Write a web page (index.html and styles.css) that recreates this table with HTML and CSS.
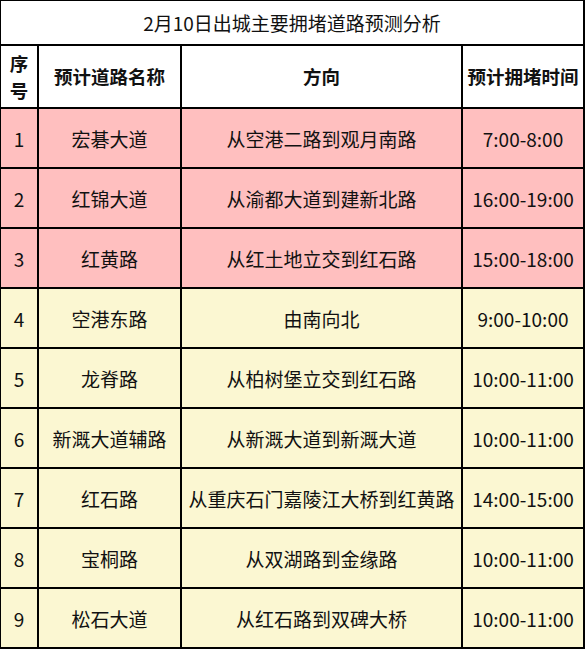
FILE: index.html
```html
<!DOCTYPE html>
<html lang="zh">
<head>
<meta charset="utf-8">
<link rel="stylesheet" href="styles.css">
</head>
<body>
<div class="table">
  <div class="cell title">2月10日出城主要拥堵道路预测分析</div>
  <div class="cell head narrow">序<br>号</div>
  <div class="cell head">预计道路名称</div>
  <div class="cell head">方向</div>
  <div class="cell head">预计拥堵时间</div>

  <div class="cell pink">1</div><div class="cell pink">宏碁大道</div><div class="cell pink">从空港二路到观月南路</div><div class="cell pink">7:00-8:00</div>
  <div class="cell pink">2</div><div class="cell pink">红锦大道</div><div class="cell pink">从渝都大道到建新北路</div><div class="cell pink">16:00-19:00</div>
  <div class="cell pink">3</div><div class="cell pink">红黄路</div><div class="cell pink">从红土地立交到红石路</div><div class="cell pink">15:00-18:00</div>
  <div class="cell yellow">4</div><div class="cell yellow">空港东路</div><div class="cell yellow">由南向北</div><div class="cell yellow">9:00-10:00</div>
  <div class="cell yellow">5</div><div class="cell yellow">龙脊路</div><div class="cell yellow">从柏树堡立交到红石路</div><div class="cell yellow">10:00-11:00</div>
  <div class="cell yellow">6</div><div class="cell yellow">新溉大道辅路</div><div class="cell yellow">从新溉大道到新溉大道</div><div class="cell yellow">10:00-11:00</div>
  <div class="cell yellow">7</div><div class="cell yellow">红石路</div><div class="cell yellow">从重庆石门嘉陵江大桥到红黄路</div><div class="cell yellow">14:00-15:00</div>
  <div class="cell yellow">8</div><div class="cell yellow">宝桐路</div><div class="cell yellow">从双湖路到金缘路</div><div class="cell yellow">10:00-11:00</div>
  <div class="cell yellow">9</div><div class="cell yellow">松石大道</div><div class="cell yellow">从红石路到双碑大桥</div><div class="cell yellow">10:00-11:00</div>
</div>
</body>
</html>
```
FILE: styles.css
```css
html, body {
  margin: 0;
  padding: 0;
  background: #ffffff;
}
body {
  font-family: "Noto Sans CJK SC", "Noto Sans", sans-serif;
  color: #111111;
}
.table {
  width: 582px;
  padding: 1px 2px 2px 1px;
  background: #000000;
  display: grid;
  grid-template-columns: 36px 141px 279px 120px;
  grid-template-rows: 43px 61px repeat(9, 58px);
  gap: 2px;
}
.cell {
  display: flex;
  align-items: center;
  justify-content: center;
  text-align: center;
  font-size: 19px;
  line-height: 27px;
  white-space: nowrap;
  overflow: hidden;
}
.title {
  grid-column: 1 / 5;
  background: #ffffff;
  font-weight: 400;
}
.head {
  background: #ffffff;
  font-weight: 700;
  font-size: 18.5px;
}
.narrow {
  line-height: 27px;
}
.pink {
  background: #ffbfbf;
}
.yellow {
  background: #fbf7d2;
}
```
